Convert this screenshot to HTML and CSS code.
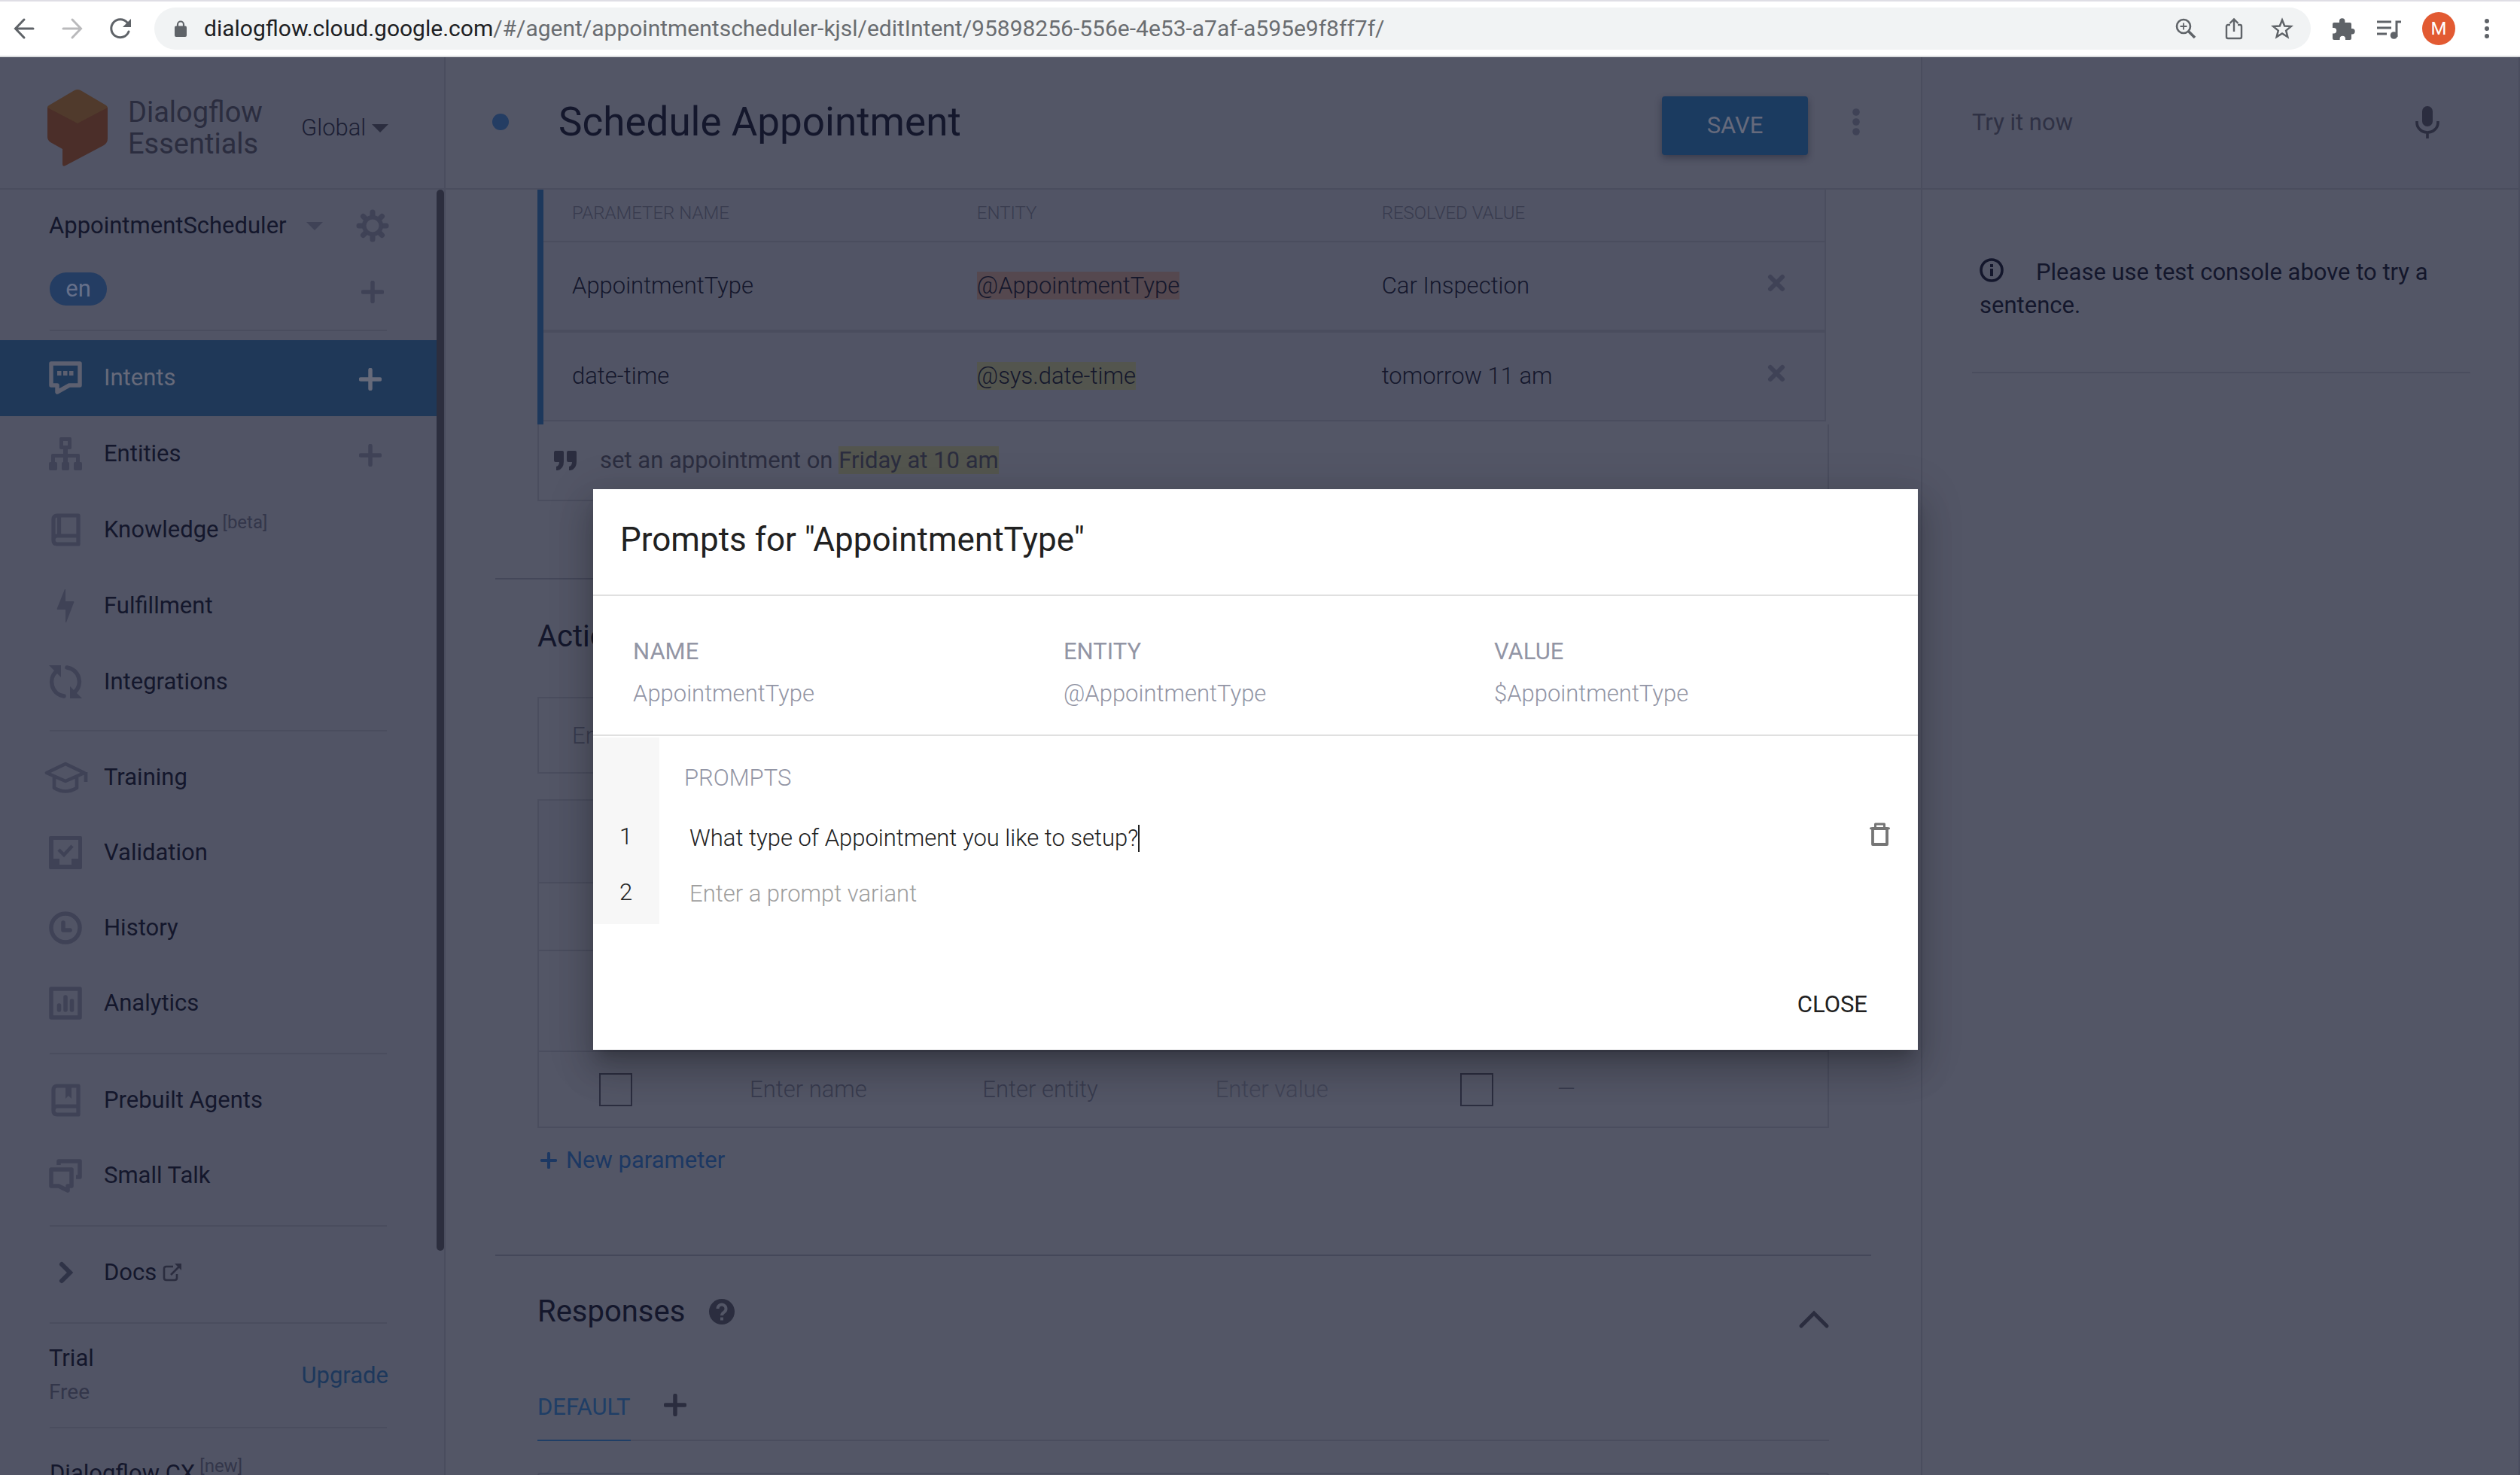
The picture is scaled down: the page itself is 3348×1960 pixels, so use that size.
FILE: index.html
```html
<!DOCTYPE html>
<html lang="en">
<head>
<meta charset="utf-8">
<title>Dialogflow Essentials</title>
<link rel="stylesheet" href="styles.css">
</head>
<body>
<svg class="sprite" aria-hidden="true">
  <symbol id="plus" viewBox="0 0 30 30"><path d="M15 2.500v25M2.500 15h25" fill="none" stroke="currentColor" stroke-width="5.500" stroke-linecap="round"/></symbol>
  <symbol id="cross" viewBox="0 0 24 24"><path d="M4 4l16 16M20 4L4 20" fill="none" stroke="currentColor" stroke-width="6" stroke-linecap="round"/></symbol>
  <symbol id="dots" viewBox="0 0 12 40"><g fill="currentColor"><circle cx="6" cy="7" r="4.800"/><circle cx="6" cy="20" r="4.800"/><circle cx="6" cy="33" r="4.800"/></g></symbol>
  <symbol id="caret" viewBox="0 0 24 12"><path d="M0 0h24L12 12z" fill="currentColor"/></symbol>
</svg>

<header class="browser">
  <div class="browser-nav">
    <button class="icon-btn" aria-label="Back"><svg class="i-nav" viewBox="0 0 26 26"><path d="M13 1L1.500 13 13 25M2 13h23" fill="none" stroke="currentColor" stroke-width="3" stroke-linecap="round"/></svg></button>
    <button class="icon-btn faded" aria-label="Forward"><svg class="i-nav" viewBox="0 0 26 26"><path d="M13 1l11.500 12L13 25M24 13H1" fill="none" stroke="currentColor" stroke-width="3" stroke-linecap="round"/></svg></button>
    <button class="icon-btn" aria-label="Reload"><svg class="i-nav" viewBox="0 0 26 26"><path d="M22 5A12 12 0 1 0 24 17" fill="none" stroke="currentColor" stroke-width="3" stroke-linecap="round"/><path d="M27 0v11H16z" fill="currentColor"/></svg></button>
  </div>
  <div class="omnibox">
    <svg class="i-lock" viewBox="0 0 16 22"><path d="M4 9V5.500a4 4 0 0 1 8 0V9" fill="none" stroke="currentColor" stroke-width="2.200"/><rect x="0" y="7.500" width="16" height="14.500" rx="2" fill="currentColor"/></svg>
    <p class="url"><b>dialogflow.cloud.google.com</b>/#/agent/appointmentscheduler-kjsl/editIntent/95898256-556e-4e53-a7af-a595e9f8ff7f/</p>
    <div class="omni-actions">
      <button class="icon-btn" aria-label="Zoom"><svg class="i-omni" viewBox="0 0 28 28"><g fill="none" stroke="currentColor"><circle cx="11" cy="11" r="9" stroke-width="2.600"/><path d="M17.500 17.500l8.500 8.500" stroke-width="3.600"/><path d="M11 6.500v9M6.500 11h9" stroke-width="1.800"/></g></svg></button>
      <button class="icon-btn" aria-label="Share"><svg class="i-omni" viewBox="0 0 28 28"><g fill="none" stroke="currentColor" stroke-width="2.400"><path d="M9 9H6a2 2 0 0 0-2 2v14a2 2 0 0 0 2 2h16a2 2 0 0 0 2-2V11a2 2 0 0 0-2-2h-3M14 18V2M8.500 7L14 1.500 19.500 7"/></g></svg></button>
      <button class="icon-btn" aria-label="Bookmark"><svg class="i-omni" viewBox="0 0 28 28"><path d="M14 2.500l3.200 8 8.600.6-6.600 5.500 2.100 8.400L14 20.400 6.700 25l2.100-8.400-6.600-5.500 8.600-.6z" fill="none" stroke="currentColor" stroke-width="2.500"/></svg></button>
    </div>
  </div>
  <div class="browser-tools">
    <button class="icon-btn" aria-label="Extensions"><svg class="i-tool" viewBox="0 0 32 32"><path d="M3 8h7V6a3.700 3.700 0 0 1 7.400 0v2H24a2 2 0 0 1 2 2v6h1a3.700 3.700 0 0 1 0 7.400h-1V29a2 2 0 0 1-2 2h-6v-1.500a3.700 3.700 0 0 0-7.400 0V31H3a2 2 0 0 1-2-2v-6.500h1.500a3.700 3.700 0 0 0 0-7.400H1V10a2 2 0 0 1 2-2z" fill="currentColor"/></svg></button>
    <button class="icon-btn" aria-label="Media"><svg class="i-tool" viewBox="0 0 32 32"><path d="M0 7h19M0 15h19M0 23h13M26 27V7h6" fill="none" stroke="currentColor" stroke-width="3"/><circle cx="22.500" cy="25" r="4.800" fill="currentColor"/></svg></button>
    <button class="avatar">M</button>
    <button class="icon-btn" aria-label="Menu"><svg class="i-menu" viewBox="0 0 8 28"><g fill="currentColor"><circle cx="4" cy="4" r="3"/><circle cx="4" cy="14" r="3"/><circle cx="4" cy="24" r="3"/></g></svg></button>
  </div>
</header>

<div class="app">
  <nav class="sidebar">
    <div class="brand">
      <svg class="logo" viewBox="0 0 80 102"><path d="M0 24L40 12l40 12v41q0 6-5 9L24 101q-4 2-4-2V79L4 70q-4-3-4-7z" fill="#4b2e29"/><path d="M40 0q2 0 4 1l34 20q2 2 2 3L40 45 0 24q0-2 2-3L36 1q2-1 4-1z" fill="#503a2c"/></svg>
      <p class="brand-name">Dialogflow<br>Essentials</p>
      <button class="region">Global <svg class="i-caret"><use href="#caret"/></svg></button>
    </div>
    <div class="sidebar-body">
      <div class="sidebar-scroll">
        <div class="agent">
          <button class="agent-name">AppointmentScheduler <svg class="i-caret muted"><use href="#caret"/></svg></button>
          <button class="icon-btn muted" aria-label="Settings"><svg class="i-gear" viewBox="0 0 44 44"><g stroke="currentColor" stroke-width="7" stroke-linecap="round"><path d="M22 4v36M4 22h36M9.500 9.500l25 25M34.500 9.500l-25 25"/></g><circle cx="22" cy="22" r="14" fill="currentColor"/><circle cx="22" cy="22" r="8.500" fill="#515465"/></svg></button>
        </div>
        <div class="lang">
          <a class="pill" href="#">en</a>
          <button class="icon-btn muted" aria-label="Add language"><svg class="i-plus"><use href="#plus"/></svg></button>
        </div>
        <ul class="nav primary">
          <li class="active"><a href="#"><svg class="i-side" viewBox="0 0 44 44"><path d="M3 3h38v29H27L11 41V32H3z" fill="none" stroke="currentColor" stroke-width="5.500" stroke-linejoin="round"/><path d="M11 13h5.500v6H11zM19 13h5.500v6H19zM27 13h5.500v6H27z" fill="currentColor"/></svg>Intents</a><button class="icon-btn" aria-label="Create intent"><svg class="i-plus"><use href="#plus"/></svg></button></li>
          <li><a href="#"><svg class="i-side" viewBox="0 0 44 44"><g fill="currentColor"><path fill-rule="evenodd" d="M16 0h12q2 0 2 2v12q0 2-2 2h-3v6h14q2 0 2 2v9h1q2 0 2 2v7q0 2-2 2h-7q-2 0-2-2v-7q0-2 2-2h1v-6H25v6h0q2 0 2 2v7q0 2-2 2h-6q-2 0-2-2v-7q0-2 2-2h0v-6H8v6h1q2 0 2 2v7q0 2-2 2H2q-2 0-2-2v-7q0-2 2-2h1v-9q0-2 2-2h14v-6h-3q-2 0-2-2V2q0-2 2-2zM19 5v6h6V5z"/></g></svg>Entities</a><button class="icon-btn muted" aria-label="Create entity"><svg class="i-plus"><use href="#plus"/></svg></button></li>
          <li><a href="#"><svg class="i-side" viewBox="0 0 44 44"><path d="M39 3H11q-5 0-5 5v28q0 5 5 5h28zM6 36q0-6 5-6h28M13.500 3v27" fill="none" stroke="currentColor" stroke-width="5.200" stroke-linejoin="round"/></svg>Knowledge<sup>[beta]</sup></a></li>
          <li><a href="#"><svg class="i-side" viewBox="0 0 44 44"><path d="M22 0v16h10q2 0 1 2L23 44h-1V27H12q-2 0-1-2L21 0z" fill="currentColor"/></svg>Fulfillment</a></li>
          <li><a href="#"><svg class="i-side" viewBox="0 0 44 44"><path d="M24 3a19 19 0 0 1 10 33M20 41A19 19 0 0 1 10 8" fill="none" stroke="currentColor" stroke-width="5.500" stroke-linecap="round"/><path d="M0 0h16v16zM44 44H28V28z" fill="currentColor"/></svg>Integrations</a></li>
        </ul>
        <ul class="nav">
          <li><a href="#"><svg class="i-side" viewBox="0 0 44 44"><path d="M-3 16L22 4l25 12-25 11zM7 20v16q15 9 30 0V20M49 15v13" fill="none" stroke="currentColor" stroke-width="4.600" stroke-linejoin="round"/></svg>Training</a></li>
          <li><a href="#"><svg class="i-side" viewBox="0 0 44 44"><path fill-rule="evenodd" d="M2 0h40q2 0 2 2v40q0 2-2 2H2q-2 0-2-2V2q0-2 2-2zM6 5v25h8v8h16v-8h9V5z" fill="currentColor"/><path d="M13 18l7 7 11-12" fill="none" stroke="currentColor" stroke-width="4.500"/></svg>Validation</a></li>
          <li><a href="#"><svg class="i-side" viewBox="0 0 44 44"><circle cx="22" cy="22" r="19" fill="none" stroke="currentColor" stroke-width="5.500"/><path d="M19 15v10h9" fill="none" stroke="currentColor" stroke-width="5.500" stroke-linecap="round" stroke-linejoin="round"/></svg>History</a></li>
          <li><a href="#"><svg class="i-side" viewBox="0 0 44 44"><rect x="3" y="3" width="38" height="38" fill="none" stroke="currentColor" stroke-width="5.500" stroke-linejoin="round"/><path d="M13.500 25v6M22 14v17M30.500 19v12" stroke="currentColor" stroke-width="5.500" stroke-linecap="round"/></svg>Analytics</a></li>
        </ul>
        <ul class="nav">
          <li><a href="#"><svg class="i-side" viewBox="0 0 44 44"><path d="M39 3H11q-5 0-5 5v28q0 5 5 5h28zM6 36q0-6 5-6h28" fill="none" stroke="currentColor" stroke-width="5.200" stroke-linejoin="round"/><path d="M22 4h8v16l-4-4-4 4z" fill="currentColor"/></svg>Prebuilt Agents</a></li>
          <li><a href="#"><svg class="i-side" viewBox="0 0 44 44"><path d="M13 8V3h28v21h-5M3 14h27v22h-5v6l-12-6H3z" fill="none" stroke="currentColor" stroke-width="5.500" stroke-linejoin="round"/></svg>Small Talk</a></li>
        </ul>
        <ul class="nav">
          <li><a href="#"><svg class="i-side dark" viewBox="0 0 44 44"><path d="M17 11l11 11-11 11" fill="none" stroke="currentColor" stroke-width="6" stroke-linecap="round"/></svg><span class="docs">Docs <svg class="i-ext" viewBox="0 0 26 24"><path d="M14 4H5Q2 4 2 7v12q0 3 3 3h11q3 0 3-3v-5M11 15L23 3" fill="none" stroke="currentColor" stroke-width="2.600"/><path d="M16 0h9v9z" fill="currentColor"/></svg></span></a></li>
        </ul>
        <div class="plan">
          <p>Trial<br><small>Free</small></p>
          <a href="#">Upgrade</a>
        </div>
        <p class="cx">Dialogflow CX<sup>[new]</sup></p>
      </div>
      <div class="thumb"></div>
    </div>
  </nav>

  <main class="main">
    <div class="main-head">
      <span class="status"></span>
      <h1>Schedule Appointment</h1>
      <button class="save">SAVE</button>
      <button class="icon-btn muted" aria-label="More"><svg class="i-dots"><use href="#dots"/></svg></button>
    </div>
    <div class="main-body">
      <section class="phrases">
        <div class="annotations">
          <table>
            <thead><tr><th class="col">PARAMETER NAME</th><th class="col">ENTITY</th><th>RESOLVED VALUE</th><th class="del"></th></tr></thead>
            <tbody>
              <tr><td>AppointmentType</td><td><mark class="salmon">@AppointmentType</mark></td><td>Car Inspection</td><td class="del"><button class="icon-btn muted" aria-label="Remove"><svg class="i-x"><use href="#cross"/></svg></button></td></tr>
              <tr><td>date-time</td><td><mark>@sys.date-time</mark></td><td>tomorrow 11 am</td><td class="del"><button class="icon-btn muted" aria-label="Remove"><svg class="i-x"><use href="#cross"/></svg></button></td></tr>
            </tbody>
          </table>
        </div>
        <div class="phrase">
          <svg class="i-quote" viewBox="0 0 30 26"><path d="M2 0h9q2 0 2 2v12q0 10-8 12H3v-5q4-1 4-6H2q-2 0-2-3V3q0-3 2-3zM19 0h9q2 0 2 2v12q0 10-8 12h-2v-5q4-1 4-6h-5q-2 0-2-3V3q0-3 2-3z" fill="currentColor"/></svg>
          <p>set an appointment on <mark>Friday at 10 am</mark></p>
        </div>
      </section>

      <section class="params ruled">
        <h2>Action and parameters</h2>
        <input class="action" type="text" placeholder="Enter action name" aria-label="Action name">
        <table>
          <thead><tr><th class="c-req"></th><th></th><th></th><th></th><th class="c-list"></th><th class="c-prompt"></th></tr></thead>
          <tbody>
            <tr class="short"><td colspan="6"></td></tr>
            <tr class="tall"><td colspan="6"></td></tr>
            <tr class="blank">
              <td class="c-req"><input type="checkbox" aria-label="Required"></td>
              <td><input type="text" placeholder="Enter name" aria-label="Parameter name"></td>
              <td><input type="text" placeholder="Enter entity" aria-label="Entity"></td>
              <td><input class="dim" type="text" placeholder="Enter value" aria-label="Value"></td>
              <td class="c-list"><input type="checkbox" aria-label="Is list"></td>
              <td class="c-prompt">—</td>
            </tr>
          </tbody>
        </table>
        <button class="new-param"><svg class="i-small"><use href="#plus"/></svg>New parameter</button>
      </section>

      <section class="responses ruled">
        <div class="resp-head">
          <h2>Responses</h2>
          <svg class="i-help" viewBox="0 0 34 34"><circle cx="17" cy="17" r="17" fill="currentColor"/><path d="M11.500 13a5.500 5.500 0 1 1 8.500 4.600q-3 2-3 4.400" fill="none" stroke="#535666" stroke-width="4"/><path d="M15 24.500h4v4h-4z" fill="#535666"/></svg>
          <button class="icon-btn collapse" aria-label="Collapse"><svg class="i-chev" viewBox="0 0 40 24"><path d="M3 21L20 4l17 17" fill="none" stroke="currentColor" stroke-width="5" stroke-linecap="round"/></svg></button>
        </div>
        <div class="tabs">
          <a class="tab" href="#">DEFAULT</a>
          <button class="icon-btn" aria-label="Add tab"><svg class="i-plus"><use href="#plus"/></svg></button>
        </div>
        <div class="resp-card"></div>
      </section>
    </div>
  </main>

  <aside class="console">
    <div class="console-head">
      <input type="text" placeholder="Try it now" aria-label="Try it now">
      <button class="icon-btn" aria-label="Speak"><svg class="i-mic" viewBox="0 0 32 44"><rect x="9" y="0" width="14" height="27" rx="7" fill="currentColor"/><path d="M2 20v2a14 13 0 0 0 28 0v-2M16 34v9" fill="none" stroke="currentColor" stroke-width="3.600"/></svg></button>
    </div>
    <p class="hint"><svg class="i-info" viewBox="0 0 32 32"><circle cx="16" cy="16" r="14" fill="none" stroke="currentColor" stroke-width="3.600"/><path d="M16 14v10M16 8v4" stroke="currentColor" stroke-width="4"/></svg>Please use test console above to try a sentence.</p>
  </aside>

  <div class="overlay">
    <div class="dialog" role="dialog" aria-labelledby="dlg-title">
      <h2 id="dlg-title">Prompts for "AppointmentType"</h2>
      <dl>
        <div><dt>NAME</dt><dd>AppointmentType</dd></div>
        <div><dt>ENTITY</dt><dd>@AppointmentType</dd></div>
        <div><dt>VALUE</dt><dd>$AppointmentType</dd></div>
      </dl>
      <div class="prompts">
        <div class="prompt-head"><span class="num"></span><h3>PROMPTS</h3></div>
        <div class="prompt"><label class="num" for="p1">1</label><input id="p1" type="text" value="What type of Appointment you like to setup?"><span class="cursor"></span><button class="icon-btn trash" aria-label="Delete prompt"><svg class="i-trash" viewBox="0 0 28 32"><path d="M4 8v21h19V8z" fill="none" stroke="currentColor" stroke-width="3.800" stroke-linejoin="round"/><path d="M1.500 7.700h24M7.500 7V2h12v5" fill="none" stroke="currentColor" stroke-width="3" stroke-linecap="round" stroke-linejoin="round"/></svg></button></div>
        <div class="prompt"><label class="num" for="p2">2</label><input id="p2" type="text" placeholder="Enter a prompt variant"></div>
      </div>
      <div class="dialog-foot"><button class="close">CLOSE</button></div>
    </div>
  </div>
</div>
</body>
</html>
```
FILE: styles.css
```css
:root {
  --bg: #535666;
  --bg-alt: #515465;
  --line: #4a4d5e;
  --line-strong: #444759;
  --ink: #14172c;
  --ink-soft: #2b2d3f;
  --hint: #383b4e;
  --muted: #3f4256;
  --blue: #1d385c;
}
* { box-sizing: border-box; }
body {
  margin: 0;
  height: 100vh;
  display: flex;
  flex-direction: column;
  overflow: hidden;
  font: 400 31px/44px Roboto, "Liberation Sans", sans-serif;
  color: var(--ink);
  background: var(--bg);
}
h1, h2, h3, p, ul, dl, dd { margin: 0; padding: 0; font-weight: 400; }
ul { list-style: none; }
a { color: inherit; text-decoration: none; }
button, input { font: inherit; color: inherit; margin: 0; padding: 0; border: 0; background: none; outline: 0; }
svg { display: block; flex: none; overflow: visible; }
table { border-collapse: separate; border-spacing: 0; table-layout: fixed; }
th { text-align: left; font-weight: 300; }
h2 { font-size: 40px; line-height: 52px; }
mark { color: inherit; background: #53554e; }
::placeholder { color: var(--hint); opacity: 1; }
.sprite { position: absolute; width: 0; height: 0; }
.icon-btn { display: grid; place-items: center; flex: none; }
.muted { color: var(--muted); }
.i-plus { width: 30px; height: 30px; }
.i-caret { width: 22px; height: 11px; }

/* Browser toolbar */
.browser {
  height: 76px;
  flex: none;
  display: flex;
  align-items: center;
  background: #fff;
  border-top: 2px solid #dfdee5;
  border-bottom: 2px solid #dadcde;
  color: #5f6368;
}
.browser-nav { display: flex; gap: 38px; padding: 0 32px 0 19px; }
.faded { color: #bababc; }
.i-nav { width: 26px; height: 26px; }
.omnibox {
  flex: 1;
  min-width: 0;
  height: 56px;
  display: flex;
  align-items: center;
  padding: 0 24px 0 27px;
  border-radius: 28px;
  background: #f1f3f4;
}
.i-lock { width: 16px; height: 22px; }
.url { flex: 1; padding-left: 23px; font-size: 30px; color: #6a6d71; white-space: nowrap; }
.url b { font-weight: 400; color: #202124; }
.omni-actions { display: flex; gap: 36px; }
.i-omni { width: 28px; height: 28px; }
.browser-tools { display: flex; align-items: center; gap: 28px; padding: 0 40px 0 28px; }
.i-tool { width: 32px; height: 32px; }
.avatar { width: 44px; height: 44px; margin-right: 10px; border-radius: 50%; background: #e25a32; color: #fff; font-size: 24px; text-align: center; }
.i-menu { width: 8px; height: 28px; }

/* App shell */
.app { position: relative; flex: 1; min-height: 0; display: flex; }
.sidebar {
  width: 592px;
  flex: none;
  display: flex;
  flex-direction: column;
  background: var(--bg-alt);
  border-right: 2px solid var(--line);
}
.brand {
  height: 176px;
  flex: none;
  display: flex;
  align-items: center;
  padding: 14px 0 0 63px;
  border-bottom: 2px solid var(--line);
  color: var(--ink-soft);
}
.logo { width: 80px; height: 102px; }
.brand-name { width: 227px; padding-left: 27px; font-size: 38px; line-height: 42px; }
.region { display: flex; align-items: center; gap: 8px; margin-left: 30px; font-weight: 300; color: #1b1e33; }
.region svg { color: var(--ink-soft); }
.sidebar-body { flex: 1; min-height: 0; display: flex; }
.sidebar-scroll { flex: 1; overflow: hidden; }
.thumb { width: 10px; height: 1410px; border-radius: 5px; background: #2c2e3e; }
.agent { height: 96px; display: flex; align-items: center; justify-content: space-between; padding: 0 63px 0 65px; }
.agent-name { display: flex; align-items: center; gap: 26px; }
.i-gear { width: 44px; height: 44px; }
.lang { display: flex; align-items: center; justify-content: space-between; margin: 14px 66px 12px; padding: 0 4px 32px 0; border-bottom: 2px solid var(--line); }
.lang .icon-btn { padding-top: 8px; }
.pill { width: 76px; line-height: 44px; border-radius: 22px; background: #243d63; color: #66708a; text-align: center; }
.nav { padding-top: 11px; }
.nav::after { content: ""; display: block; height: 2px; margin: 16px 66px 0; background: var(--line); }
.nav li { height: 100px; display: flex; align-items: center; justify-content: space-between; padding: 0 73px 0 65px; }
.nav a { flex: 1; display: flex; align-items: center; gap: 29px; }
.nav.primary { padding-top: 0; }
.nav.primary::after { margin-top: 13px; }
.nav.primary li { height: 101px; padding-bottom: 2px; }
.nav.primary .icon-btn { padding-top: 5px; }
.i-side { width: 44px; height: 44px; color: var(--muted); }
.dark { color: #2f3347; }
.nav .active { background: #1f3858; color: #666a7a; }
.active .i-side { color: #5d6070; }
sup { align-self: flex-start; font-size: 24px; line-height: 24px; color: #33364a; }
.nav sup { margin-left: -24px; }
.docs { display: flex; align-items: center; gap: 8px; }
.i-ext { width: 26px; height: 24px; color: var(--ink-soft); }
.plan { display: flex; align-items: center; justify-content: space-between; margin: 0 64px 0 65px; padding: 24px 0; }
.plan small { font-size: 28px; color: #33364a; }
.plan a { color: var(--blue); }
.cx { display: flex; gap: 6px; margin: 0 66px; padding: 38px 0; border-top: 2px solid var(--line); }

/* Intent editor */
.main { flex: 1; min-width: 0; display: flex; flex-direction: column; }
.main-head {
  height: 176px;
  flex: none;
  display: flex;
  align-items: center;
  padding: 0 80px 2px 62px;
  border-bottom: 2px solid var(--line);
}
.status { width: 22px; height: 22px; border-radius: 50%; background: #243d63; }
h1 { flex: 1; padding-left: 66px; font-size: 53px; line-height: 64px; }
.save {
  width: 194px;
  height: 78px;
  margin: 10px 58px 0 0;
  border-radius: 4px;
  background: #1b3b60;
  color: #666a7c;
  box-shadow: 0 4px 10px rgba(20, 22, 40, .4);
}
.i-dots { width: 12px; height: 40px; }
.main-body { flex: 1; min-height: 0; overflow: hidden; padding: 0 66px; }
.main-body section { padding: 0 56px; }
.ruled::before { content: ""; display: block; height: 2px; margin: 0 -56px; background: var(--line-strong); }

.annotations { margin-right: 4px; padding-bottom: 4px; border-left: 8px solid var(--blue); font-weight: 300; }
.annotations table { width: 100%; background: var(--bg-alt); border-right: 2px solid var(--line); }
.annotations th { height: 70px; padding: 0 0 6px 38px; font-size: 24px; line-height: 28px; color: var(--hint); border-bottom: 2px solid var(--line); }
.annotations .col { width: 31.6%; }
.annotations td { height: 120px; padding: 0 0 0 38px; border-bottom: 4px solid var(--line); }
.annotations tr:last-child td { height: 118px; border-bottom-width: 2px; }
.annotations .del { width: 128px; padding: 0 0 8px 52px; }
.i-x { width: 24px; height: 24px; }
.salmon { background: #55484f; }
.phrase { display: flex; align-items: center; gap: 31px; height: 102px; margin-bottom: 102px; padding: 0 0 5px 20px; border: 2px solid var(--line); border-top: 0; color: var(--ink-soft); font-weight: 300; }
.i-quote { width: 30px; height: 26px; }

.params h2 { padding: 50px 0 54px; }
.action { display: block; width: 100%; height: 102px; margin-bottom: 34px; padding: 0 44px; border: 2px solid var(--line); font-weight: 300; }
.params table { width: 100%; border: 2px solid var(--line); }
.params td, .params th { padding: 0 0 0 38px; border-bottom: 2px solid var(--line); }
.params tr:last-child td { border-bottom: 0; }
.params th { height: 110px; background: var(--bg-alt); border-bottom: 2px solid var(--line); }
.params .short td { height: 90px; }
.params .tall td { height: 134px; }
.params .blank td { height: 99px; font-weight: 300; }
.params td input[type="text"] { width: 100%; }
.params .c-req { width: 242px; padding-left: 80px; }
.params .c-list { width: 145px; padding-left: 54px; }
.params .c-prompt { width: 397px; }
.params .blank .c-prompt { color: var(--hint); }
input[type="checkbox"] { appearance: none; display: block; width: 44px; height: 44px; border: 2px solid var(--ink-soft); }
.dim::placeholder { color: #414457; }
.new-param { display: flex; align-items: center; gap: 12px; margin: 21px 0 103px 4px; color: #1c3863; }
.i-small { width: 22px; height: 22px; }

.resp-head { display: flex; align-items: center; gap: 32px; padding: 48px 0 60px; color: var(--ink-soft); }
.resp-head h2 { color: var(--ink); }
.i-help { width: 34px; height: 34px; }
.collapse { margin-left: auto; padding-top: 20px; }
.i-chev { width: 40px; height: 24px; }
.tabs { display: flex; gap: 44px; border-bottom: 2px solid var(--line); color: var(--ink-soft); }
.tabs .icon-btn { padding-bottom: 8px; }
.tab { padding: 19px 0 21px; margin-bottom: -2px; border-bottom: 2px solid #1f3e66; color: #1f3e66; }
.resp-card { height: 80px; margin-top: 42px; border: 2px solid var(--line); border-radius: 4px; }

/* Test console */
.console { width: 796px; flex: none; border-left: 2px solid var(--line); border-right: 2px solid var(--line); }
.console-head { height: 176px; display: flex; align-items: center; padding: 0 105px 0 66px; background: var(--bg-alt); border-bottom: 2px solid var(--line); color: var(--ink-soft); }
.console-head input { flex: 1; min-width: 0; }
.console-head ::placeholder { color: #2f3144; }
.i-mic { width: 32px; height: 44px; }
.hint { margin: 88px 64px 0 66px; padding: 0 10px 66px; border-bottom: 2px solid var(--line); }
.i-info { display: inline-block; width: 32px; height: 32px; margin-right: 43px; vertical-align: -3px; }

/* Prompts dialog */
.overlay { position: absolute; inset: 0; display: grid; place-items: center; padding: 8px 12px 0 0; }
.dialog {
  width: 1760px;
  max-width: 90%;
  background: #fff;
  color: #212121;
  box-shadow: 0 15px 18px -9px rgba(0, 0, 0, .2), 0 29px 42px 4px rgba(0, 0, 0, .14), 0 11px 53px 9px rgba(0, 0, 0, .12);
}
.dialog h2 { padding: 41px 36px 47px; font-size: 44px; border-bottom: 2px solid #e0e0e0; }
.dialog dl { display: grid; grid-template-columns: repeat(3, 1fr); padding: 46px 22px 26px; border-bottom: 2px solid #e0e0e0; line-height: 56px; color: #9295a5; }
.dialog dl div { padding-left: 31px; }
.dialog dd { font-weight: 300; }
.prompts { margin-top: 2px; }
.num { width: 88px; align-self: stretch; padding: 13px 0 0 35px; background: #f7f7f7; font-weight: 300; }
.prompt-head { display: flex; align-items: center; height: 97px; }
.prompt-head h3 { padding: 11px 0 0 33px; font-size: 31px; font-weight: 300; color: #9295a5; }
.prompt { display: flex; align-items: center; height: 74px; font-weight: 300; }
.prompt input { height: 44px; margin-left: 40px; field-sizing: content; }
.prompt ::placeholder { color: #9e9e9e; }
.prompt:last-child { height: 77px; }
.prompt:last-child input { margin-bottom: 3px; }
.cursor { width: 2px; height: 36px; background: #212121; }
.trash { margin-left: auto; padding: 0 36px 9px 0; color: #757575; }
.i-trash { width: 28px; height: 32px; }
.dialog-foot { display: flex; justify-content: flex-end; padding: 67px 36px 20px; }
.close { height: 80px; padding: 0 31px; }
```
